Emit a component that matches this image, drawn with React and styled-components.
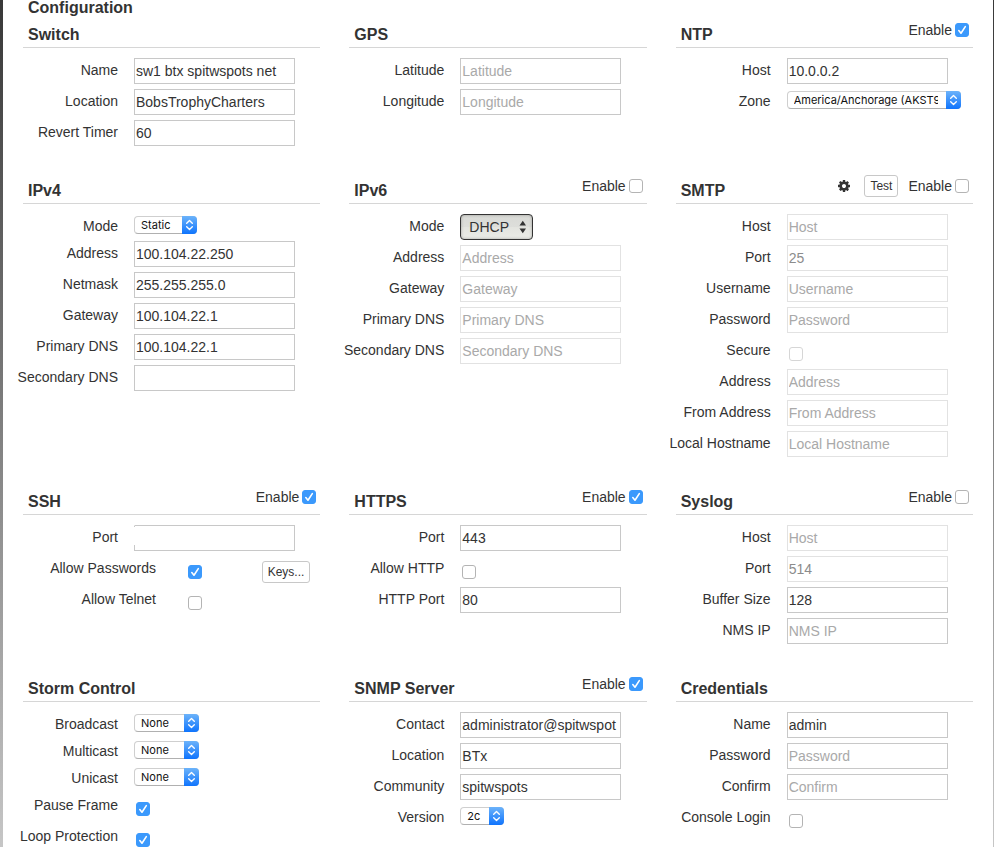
import { useId } from "react"
import styled, { createGlobalStyle, css } from "styled-components"

const GlobalStyle = createGlobalStyle`
  * {
    box-sizing: border-box;
  }
  body {
    margin: 0;
    color: #333;
    font: 14px/20px "Helvetica Neue", "Liberation Sans", Arial, sans-serif;
  }
`

const Page = styled.div`
  height: 100vh;
  padding: 0 1px 0 3px;
  overflow: hidden;
  background: linear-gradient(#383838, #c6c6c6);
`
const Panel = styled.main`
  min-height: 100%;
  padding: 0 20px;
  background-color: white;
`
const PageTitle = styled.h1`
  margin: 0;
  padding: 0 5px 2px;
  font-size: 16px;
  line-height: 15px;
`
const Sections = styled.div`
  display: grid;
  grid-template-columns: repeat(3, minmax(0, 1fr));
  gap: 22px 29px;
`
const SectionHeader = styled.header`
  display: flex;
  justify-content: space-between;
  align-items: flex-start;
  height: 31px;
  margin-bottom: 10px;
  padding: 0 4px 0 5px;
  border-bottom: 1px solid #d6d6d6;
`
const SectionTitle = styled.h2`
  margin: 0;
  font-size: 16px;
  line-height: 36px;
`
const Actions = styled.div`
  display: flex;
  align-items: center;
  gap: 10px;
  height: 26px;
`
const EnableLabel = styled.label`
  display: flex;
  align-items: center;
  gap: 3px;
`
const Row = styled.div`
  display: flex;
  align-items: flex-start;
  height: ${(p) => (p.$compact ? "27px" : "31px")};
`
const Label = styled.label`
  flex: none;
  width: ${(p) => (p.$wide ? "143px" : "105px")};
  margin-left: -10px;
  margin-right: ${(p) => (p.$wide ? "30px" : "16px")};
  line-height: 24px;
  text-align: right;
  white-space: nowrap;
`
const TextInput = styled.input`
  width: 161px;
  height: 26px;
  padding: 0 1px;
  border: 1px solid #c8c8c8;
  border-radius: 0;
  background-color: white;
  color: #333;
  font: inherit;
  &::placeholder {
    color: #a9a9a9;
  }
  &:disabled {
    border-color: #e2e2e2;
    color: #8c8c8c;
  }
  ${(p) =>
    p.$open &&
    css`
      border-left-color: transparent;
      background: linear-gradient(#c8c8c8 2px, white 2px 20px, #c8c8c8 20px)
        left / 1px 100% no-repeat border-box;
    `}
`
const TickBox = styled.span`
  position: relative;
  display: block;
  flex: none;
  width: 14px;
  height: 14px;
  margin: ${(p) => (p.$inRow ? "9px 0 0 2px" : "0")};
`
const TickInput = styled.input`
  display: block;
  width: 14px;
  height: 14px;
  margin: 0;
  appearance: none;
  border: 1px solid #b4b4b4;
  border-radius: 3px;
  background-color: white;
  &:checked {
    border-color: #3b99fc;
    background-color: #3b99fc;
  }
  &:disabled {
    border-color: #d6d6d6;
  }
  & + svg {
    position: absolute;
    inset: 0;
    display: none;
    pointer-events: none;
  }
  &:checked + svg {
    display: block;
  }
`
const SelectBox = styled.span`
  position: relative;
  display: block;
  width: ${(p) => p.$width};
  & > svg {
    position: absolute;
    top: 0;
    right: 0;
    pointer-events: none;
  }
`
const NativeSelect = styled.select`
  display: block;
  width: 100%;
  height: 18px;
  margin-top: 2px;
  padding: 0 22px 0 6px;
  appearance: none;
  border: 1px solid #cfcfcf;
  border-bottom-color: #b0b0b0;
  border-radius: 4px;
  background-color: white;
  color: #111;
  font: 11px Inter, Roboto, sans-serif;
  & + svg {
    top: 2px;
  }
`
const DarkSelect = styled.select`
  display: block;
  width: 100%;
  height: 26px;
  padding: 0 20px 0 8px;
  appearance: none;
  border: 1px solid #333;
  border-radius: 4px;
  background: linear-gradient(#d9dad6, #dddeda 50%, #e3e4df 50%, #ebece7);
  box-shadow: inset 0 0 3px rgba(0, 0, 0, 0.3);
  color: #333;
  font: inherit;
`
const Button = styled.button`
  height: 22px;
  padding: 0 5px;
  border: 1px solid #c8c8c8;
  border-radius: 3px;
  background-color: white;
  color: #333;
  font: 12px "Helvetica Neue", "Liberation Sans", Arial, sans-serif;
`
const RowButton = styled(Button)`
  margin: 5px 10px 0 auto;
`
const IconButton = styled.button`
  display: flex;
  margin-right: 4px;
  padding: 0;
  border: none;
  background: none;
  color: #333;
`

const sections = [
  {
    title: "Switch",
    fields: [
      { label: "Name", value: "sw1 btx spitwspots net" },
      { label: "Location", value: "BobsTrophyCharters" },
      { label: "Revert Timer", value: "60" },
    ],
  },
  {
    title: "GPS",
    fields: [
      { label: "Latitude", placeholder: "Latitude" },
      { label: "Longitude", placeholder: "Longitude" },
    ],
  },
  {
    title: "NTP",
    enable: true,
    fields: [
      { label: "Host", value: "10.0.0.2" },
      {
        label: "Zone",
        type: "select",
        width: "174px",
        options: ["America/Anchorage (AKST9AKDT)"],
      },
    ],
  },
  {
    title: "IPv4",
    fields: [
      {
        label: "Mode",
        type: "select",
        width: "63px",
        options: ["Static", "DHCP"],
        compact: true,
      },
      { label: "Address", value: "100.104.22.250" },
      { label: "Netmask", value: "255.255.255.0" },
      { label: "Gateway", value: "100.104.22.1" },
      { label: "Primary DNS", value: "100.104.22.1" },
      { label: "Secondary DNS" },
    ],
  },
  {
    title: "IPv6",
    enable: false,
    fields: [
      { label: "Mode", type: "dark", width: "73px", options: ["DHCP", "Static"] },
      { label: "Address", placeholder: "Address", disabled: true },
      { label: "Gateway", placeholder: "Gateway", disabled: true },
      { label: "Primary DNS", placeholder: "Primary DNS", disabled: true },
      { label: "Secondary DNS", placeholder: "Secondary DNS", disabled: true },
    ],
  },
  {
    title: "SMTP",
    enable: false,
    testable: true,
    fields: [
      { label: "Host", placeholder: "Host", disabled: true },
      { label: "Port", value: "25", disabled: true },
      { label: "Username", placeholder: "Username", disabled: true },
      { label: "Password", type: "password", placeholder: "Password", disabled: true },
      { label: "Secure", type: "checkbox", disabled: true },
      { label: "Address", placeholder: "Address", disabled: true },
      { label: "From Address", placeholder: "From Address", disabled: true },
      { label: "Local Hostname", placeholder: "Local Hostname", disabled: true },
    ],
  },
  {
    title: "SSH",
    enable: true,
    fields: [
      { label: "Port", open: true },
      {
        label: "Allow Passwords",
        type: "checkbox",
        checked: true,
        wide: true,
        button: "Keys...",
      },
      { label: "Allow Telnet", type: "checkbox", wide: true },
    ],
  },
  {
    title: "HTTPS",
    enable: true,
    fields: [
      { label: "Port", value: "443" },
      { label: "Allow HTTP", type: "checkbox" },
      { label: "HTTP Port", value: "80" },
    ],
  },
  {
    title: "Syslog",
    enable: false,
    fields: [
      { label: "Host", placeholder: "Host", disabled: true },
      { label: "Port", value: "514", disabled: true },
      { label: "Buffer Size", value: "128" },
      { label: "NMS IP", placeholder: "NMS IP" },
    ],
  },
  {
    title: "Storm Control",
    fields: [
      { label: "Broadcast", type: "select", width: "65px", options: ["None"], compact: true },
      { label: "Multicast", type: "select", width: "65px", options: ["None"], compact: true },
      { label: "Unicast", type: "select", width: "65px", options: ["None"], compact: true },
      { label: "Pause Frame", type: "checkbox", checked: true },
      { label: "Loop Protection", type: "checkbox", checked: true },
    ],
  },
  {
    title: "SNMP Server",
    enable: true,
    fields: [
      { label: "Contact", value: "administrator@spitwspot" },
      { label: "Location", value: "BTx" },
      { label: "Community", value: "spitwspots" },
      { label: "Version", type: "select", width: "44px", options: ["2c", "1"] },
    ],
  },
  {
    title: "Credentials",
    fields: [
      { label: "Name", value: "admin" },
      { label: "Password", type: "password", placeholder: "Password" },
      { label: "Confirm", type: "password", placeholder: "Confirm" },
      { label: "Console Login", type: "checkbox" },
    ],
  },
]

function Checkbox({ id, checked, disabled, inRow }) {
  return (
    <TickBox $inRow={inRow}>
      <TickInput type="checkbox" id={id} defaultChecked={checked} disabled={disabled} />
      <svg width="14" height="14" viewBox="0 0 14 14" aria-hidden="true">
        <path
          d="M3.8 7.6 6 10.2 10.3 3.6"
          fill="none"
          stroke="white"
          strokeWidth="1.6"
          strokeLinecap="round"
          strokeLinejoin="round"
        />
      </svg>
    </TickBox>
  )
}

function SelectArrows() {
  const gradientId = useId()
  return (
    <svg width="15" height="18" viewBox="0 0 15 18" aria-hidden="true">
      <defs>
        <linearGradient id={gradientId} x1="0" y1="0" x2="0" y2="1">
          <stop offset="0" stopColor="#6cb3fa" />
          <stop offset="1" stopColor="#0f74fd" />
        </linearGradient>
      </defs>
      <path
        d="M0 0H11A4 4 0 0 1 15 4V14A4 4 0 0 1 11 18H0Z"
        fill={`url(#${gradientId})`}
      />
      <path
        d="M4.7 7.2 7.5 4.6 10.3 7.2M4.7 10.8 7.5 13.4 10.3 10.8"
        fill="none"
        stroke="white"
        strokeWidth="1.4"
        strokeLinecap="round"
        strokeLinejoin="round"
      />
    </svg>
  )
}

function DarkArrows() {
  return (
    <svg width="20" height="26" viewBox="0 0 20 26" aria-hidden="true">
      <path d="M6.5 11.5 9.8 6.8 13 11.5ZM6.5 14.5 9.8 19.2 13 14.5Z" fill="#333" />
    </svg>
  )
}

function Gear() {
  return (
    <svg width="12" height="12" viewBox="128 128 1536 1536" fill="currentColor" aria-hidden="true">
      <path d="M1152 896q0-106-75-181t-181-75-181 75-75 181 75 181 181 75 181-75 75-181zm512-109v222q0 12-8 23t-20 13l-185 28q-19 54-39 91 35 50 107 138 10 12 10 25t-9 23q-27 37-99 108t-94 71q-12 0-26-9l-138-108q-44 23-91 38-16 136-29 186-7 28-36 28h-222q-14 0-24.5-8.5t-11.5-21.5l-28-184q-49-16-90-37l-141 107q-10 9-25 9-14 0-25-11-126-114-165-168-7-10-7-23 0-12 8-23 15-21 51-66.5t54-70.5q-27-50-41-99l-183-27q-13-2-21-12.5t-8-23.5v-222q0-12 8-23t19-13l186-28q14-46 39-92-40-57-107-138-10-12-10-24 0-10 9-23 26-36 98.5-107.5t94.5-71.5q13 0 26 10l138 107q44-23 91-38 16-136 29-186 7-28 36-28h222q14 0 24.5 8.5t11.5 21.5l28 184q49 16 90 37l142-107q9-9 24-9 13 0 25 10 129 119 165 170 7 8 7 22 0 12-8 23-15 21-51 66.5t-54 70.5q26 50 41 98l183 28q13 2 21 12.5t8 23.5z" />
    </svg>
  )
}

function Control({ id, field }) {
  const { type = "text", options, width, checked, disabled } = field
  if (type === "checkbox")
    return <Checkbox id={id} checked={checked} disabled={disabled} inRow />
  if (type === "select" || type === "dark") {
    const Select = type === "dark" ? DarkSelect : NativeSelect
    return (
      <SelectBox $width={width}>
        <Select id={id}>
          {options.map((option) => (
            <option key={option}>{option}</option>
          ))}
        </Select>
        {type === "dark" ? <DarkArrows /> : <SelectArrows />}
      </SelectBox>
    )
  }
  return (
    <TextInput
      id={id}
      type={type}
      defaultValue={field.value}
      placeholder={field.placeholder}
      disabled={disabled}
      $open={field.open}
    />
  )
}

function Field({ field }) {
  const id = useId()
  return (
    <Row $compact={field.compact}>
      <Label htmlFor={id} $wide={field.wide}>
        {field.label}
      </Label>
      <Control id={id} field={field} />
      {field.button && <RowButton type="button">{field.button}</RowButton>}
    </Row>
  )
}

function Section({ title, enable, testable, fields }) {
  const enableId = useId()
  return (
    <section>
      <SectionHeader>
        <SectionTitle>{title}</SectionTitle>
        <Actions>
          {testable && (
            <>
              <IconButton type="button" aria-label="Settings">
                <Gear />
              </IconButton>
              <Button type="button">Test</Button>
            </>
          )}
          {enable !== undefined && (
            <EnableLabel htmlFor={enableId}>
              Enable
              <Checkbox id={enableId} checked={enable} />
            </EnableLabel>
          )}
        </Actions>
      </SectionHeader>
      {fields.map((field) => (
        <Field key={field.label} field={field} />
      ))}
    </section>
  )
}

function App() {
  return (
    <Page>
      <GlobalStyle />
      <Panel>
        <PageTitle>Configuration</PageTitle>
        <Sections>
          {sections.map((section) => (
            <Section key={section.title} {...section} />
          ))}
        </Sections>
      </Panel>
    </Page>
  )
}
export default App
